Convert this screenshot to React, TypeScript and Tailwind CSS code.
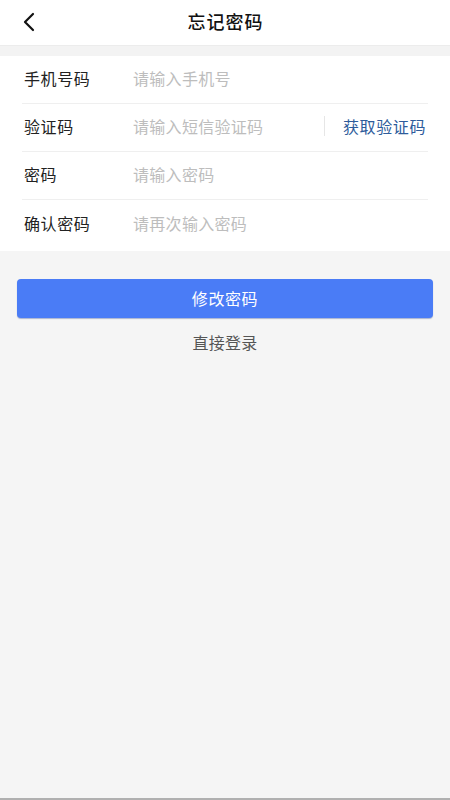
const font = {
  fontFamily: '"Noto Sans CJK SC", "Noto Sans", sans-serif',
};

type Field = {
  label: string;
  placeholder: string;
  action?: string;
};

const fields: Field[] = [
  { label: "手机号码", placeholder: "请输入手机号" },
  { label: "验证码", placeholder: "请输入短信验证码", action: "获取验证码" },
  { label: "密码", placeholder: "请输入密码" },
  { label: "确认密码", placeholder: "请再次输入密码" },
];

export default function App() {
  return (
    <div
      className="flex min-h-[800px] w-[450px] flex-col bg-[#f5f5f5]"
      style={font}
    >
      <header className="relative flex h-[45px] items-center justify-center bg-white pb-[3px]">
        <button className="absolute left-[19px] top-[12px] flex h-[20px] w-[20px] items-center justify-center">
          <svg width="14" height="20" viewBox="0 0 14 20" fill="none">
            <path
              d="M11 2 L3 10 L11 18"
              stroke="#111"
              strokeWidth="2.2"
              strokeLinecap="round"
              strokeLinejoin="round"
            />
          </svg>
        </button>
        <h1 className="pl-[1px] text-[18px] font-medium tracking-[1px] text-[#111]">
          忘记密码
        </h1>
      </header>

      <div className="h-[11px] border-t border-[#ececec] bg-[#f3f3f3]" />

      <div className="bg-white px-[22px] pb-[3px]">
        {fields.map((f, i) => (
          <div
            key={f.label}
            className={`flex h-[48px] items-center pb-[3px] ${
              i < fields.length - 1 ? "border-b border-[#efefef]" : ""
            }`}
          >
            <span className="w-[111px] pl-[2px] text-[16px] tracking-[0.6px] text-[#222]">
              {f.label}
            </span>
            <input
              className="min-w-0 flex-1 bg-transparent text-[16px] tracking-[0.3px] text-[#333] outline-none placeholder:text-[#bdbdbd]"
              placeholder={f.placeholder}
            />
            {f.action && (
              <div className="flex items-center">
                <span className="mr-[18px] h-[20px] w-px bg-[#e6e6e6]" />
                <span className="mr-[2px] text-[16px] tracking-[0.6px] text-[#2e5c9b]">
                  {f.action}
                </span>
              </div>
            )}
          </div>
        ))}
      </div>

      <div className="flex flex-col items-center px-[17px] pt-[28px]">
        <button className="h-[39px] w-full rounded-[4px] bg-[#4a7cf6] pb-[2px] text-[16px] tracking-[0.6px] text-white shadow-[0_1px_1px_rgba(30,60,140,0.35)]">
          修改密码
        </button>
        <span className="mt-[12px] text-[16px] tracking-[0.3px] text-[#555]">
          直接登录
        </span>
      </div>

      <div className="flex-1" />
      <div className="h-[2px] bg-[#b0b0b0]" />
    </div>
  );
}
